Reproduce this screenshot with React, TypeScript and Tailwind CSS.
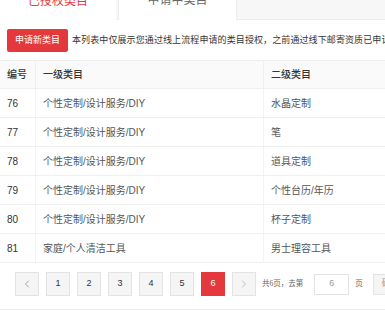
import React from "react";
import { ChevronLeft, ChevronRight } from "lucide-react";

const rows = [
    { id: 76, first: "个性定制/设计服务/DIY", second: "水晶定制" },
    { id: 77, first: "个性定制/设计服务/DIY", second: "笔" },
    { id: 78, first: "个性定制/设计服务/DIY", second: "道具定制" },
    { id: 79, first: "个性定制/设计服务/DIY", second: "个性台历/年历" },
    { id: 80, first: "个性定制/设计服务/DIY", second: "杯子定制" },
    { id: 81, first: "家庭/个人清洁工具", second: "男士理容工具" },
];

function PageButton({ children, active }: { children: React.ReactNode; active?: boolean }) {
    return (
        <div
            className={
                active
                    ? "w-[24px] h-[24px] flex items-center justify-center bg-[#e4393c] text-white text-[9px]"
                    : "w-[24px] h-[24px] flex items-center justify-center bg-[#f5f5f5] border border-[#e3e3e3] text-[#333] text-[9px]"
            }
        >
            {children}
        </div>
    );
}

export default function App() {
    return (
        <div className="w-[385px] h-[312px] overflow-hidden bg-white font-['Liberation_Sans','Noto_Sans_CJK_SC',sans-serif]">
            <div className="w-[520px]">
                {/* Tabs */}
                <div className="-mt-[20px] flex h-[40px] bg-[#f7f7f7] border-b border-[#ececec]">
                    <div className="w-[116px] h-[41px] bg-white flex items-center justify-center text-[12px] text-[#e4393c]">
                        已授权类目
                    </div>
                    <div className="ml-[2px] w-[119px] h-[40px] bg-white border-x border-[#ececec] flex items-center justify-center text-[12px] text-[#666]">
                        申请中类目
                    </div>
                </div>

                {/* Action bar */}
                <div className="mt-[9px] pl-[7px] flex items-center whitespace-nowrap">
                    <button className="w-[61px] h-[23px] rounded-[2px] bg-[#e4393c] text-white text-[9px] flex items-center justify-center">
                        申请新类目
                    </button>
                    <span className="ml-[4px] text-[9px] tracking-[0.1px] text-[#333]">
                        本列表中仅展示您通过线上流程申请的类目授权，之前通过线下邮寄资质已申请的类目请联系客服查询
                    </span>
                </div>

                {/* Table */}
                <div className="mt-[8px] text-[10px]">
                    <div className="flex h-[29px] items-center bg-[#fafafa] border-y border-[#efefef] text-[#333] font-medium">
                        <div className="w-[36px] h-full flex items-center pl-[7px] border-r border-[#efefef]">编号</div>
                        <div className="w-[228px] h-full flex items-center pl-[7px] border-r border-[#efefef]">一级类目</div>
                        <div className="flex-1 h-full flex items-center pl-[7px]">二级类目</div>
                    </div>
                    {rows.map((r) => (
                        <div key={r.id} className="flex h-[29px] items-center border-b border-[#efefef] text-[#555]">
                            <div className="w-[36px] h-full flex items-center pl-[7px] border-r border-[#f3f3f3] text-[#333]">{r.id}</div>
                            <div className="w-[228px] h-full flex items-center pl-[7px] border-r border-[#f3f3f3]">{r.first}</div>
                            <div className="flex-1 h-full flex items-center pl-[7px]">{r.second}</div>
                        </div>
                    ))}
                </div>

                {/* Pagination */}
                <div className="pt-[9px] pb-[13px] pl-[15px] flex items-center border-b border-[#eaeaea]">
                    <div className="flex items-center gap-[7px]">
                        <PageButton>
                            <ChevronLeft size={12} strokeWidth={1.5} className="text-[#888]" />
                        </PageButton>
                        <PageButton>1</PageButton>
                        <PageButton>2</PageButton>
                        <PageButton>3</PageButton>
                        <PageButton>4</PageButton>
                        <PageButton>5</PageButton>
                        <PageButton active>6</PageButton>
                        <PageButton>
                            <ChevronRight size={12} strokeWidth={1.5} className="text-[#aaa]" />
                        </PageButton>
                    </div>
                    <span className="ml-[6px] text-[7.5px] text-[#666] font-['Liberation_Serif','Noto_Sans_CJK_SC',serif]">共6页，去第</span>
                    <div className="ml-[11px] w-[35px] h-[21px] border border-[#e3e3e3] flex items-center justify-center text-[9px] text-[#999]">
                        6
                    </div>
                    <span className="ml-[6px] text-[7.5px] text-[#666]">页</span>
                    <div className="ml-[10px] w-[36px] h-[21px] border border-[#e3e3e3] bg-[#f5f5f5] flex items-center justify-center text-[9px] text-[#999]">
                        确定
                    </div>
                </div>
            </div>
        </div>
    );
}
